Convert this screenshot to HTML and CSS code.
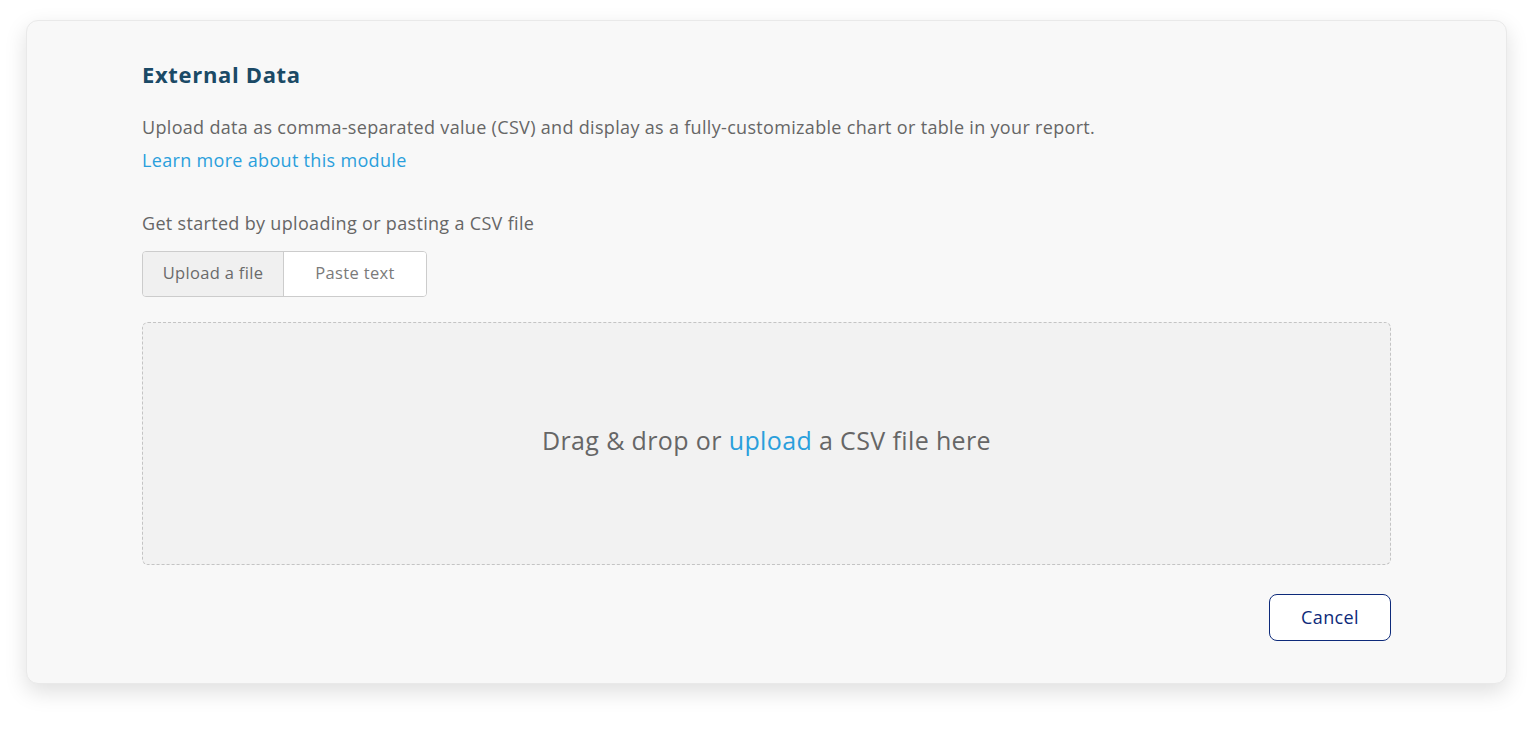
FILE: index.html
```html
<!DOCTYPE html>
<html>
<head>
<meta charset="utf-8">
<link rel="stylesheet" href="styles.css">
</head>
<body>
<div class="card">
  <h2 class="title">External Data</h2>
  <p class="desc">Upload data as comma-separated value (CSV) and display as a fully-customizable chart or table in your report.</p>
  <a class="learn" href="#">Learn more about this module</a>
  <p class="started">Get started by uploading or pasting a CSV file</p>
  <div class="toggle">
    <button class="tab active">Upload a file</button>
    <button class="tab">Paste text</button>
  </div>
  <div class="drop">
    <span>Drag &amp; drop or <a class="up" href="#">upload</a> a CSV file here</span>
  </div>
  <div class="actions">
    <button class="cancel">Cancel</button>
  </div>
</div>
</body>
</html>
```
FILE: styles.css
```css
html, body {
  margin: 0;
  padding: 0;
  background: #ffffff;
  font-family: "Open Sans", "Liberation Sans", sans-serif;
  letter-spacing: 0.02em;
}
body {
  box-sizing: border-box;
  min-height: 731px;
  padding: 20px 34px 0 26px;
}
.card {
  box-sizing: border-box;
  width: 1481px;
  background: #f8f8f8;
  border: 1px solid #e9e9e9;
  border-radius: 12px;
  box-shadow: 0 8px 22px rgba(0,0,0,0.13);
  padding: 38px 115px 42px 115px;
  display: flex;
  flex-direction: column;
}
.title {
  margin: 0;
  font-size: 22px;
  font-weight: 700;
  color: #1b4a66;
  line-height: 30px;
  letter-spacing: 0.03em;
}
.desc {
  margin: 25px 0 0 0;
  font-size: 18px;
  line-height: 26px;
  color: #666666;
}
.learn {
  margin-top: 7px;
  font-size: 18px;
  line-height: 26px;
  color: #2a9fdc;
  text-decoration: none;
  align-self: flex-start;
}
.started {
  margin: 37px 0 0 0;
  font-size: 18px;
  line-height: 26px;
  color: #666666;
}
.toggle {
  margin-top: 15px;
  display: flex;
  align-self: flex-start;
  border: 1px solid #cccccc;
  border-radius: 4px;
  overflow: hidden;
}
.tab {
  font-family: inherit;
  letter-spacing: 0.02em;
  font-size: 16.5px;
  color: #7a7a7a;
  background: #ffffff;
  border: 0;
  height: 44px;
  padding: 0 0 3px 0;
  width: 142px;
  cursor: pointer;
}
.tab.active {
  width: 141px;
  background: #f0f0f0;
  color: #6a6a6a;
  border-right: 1px solid #cccccc;
}
.drop {
  margin-top: 25px;
  height: 243px;
  box-sizing: border-box;
  padding-bottom: 7px;
  border: 1px dashed #c4c4c4;
  border-radius: 6px;
  background: #f2f2f2;
  display: flex;
  align-items: center;
  justify-content: center;
  font-size: 25px;
  letter-spacing: 0.015em;
  color: #666666;
}
.up {
  color: #2a9fdc;
  text-decoration: none;
}
.actions {
  margin-top: 29px;
  display: flex;
  justify-content: flex-end;
}
.cancel {
  box-sizing: border-box;
  width: 122px;
  height: 47px;
  padding: 0 0 2px 0;
  border: 1.5px solid #0d2a7a;
  border-radius: 8px;
  background: #ffffff;
  color: #0d2a7a;
  font-family: inherit;
  letter-spacing: 0.02em;
  font-size: 18px;
  cursor: pointer;
}
```
